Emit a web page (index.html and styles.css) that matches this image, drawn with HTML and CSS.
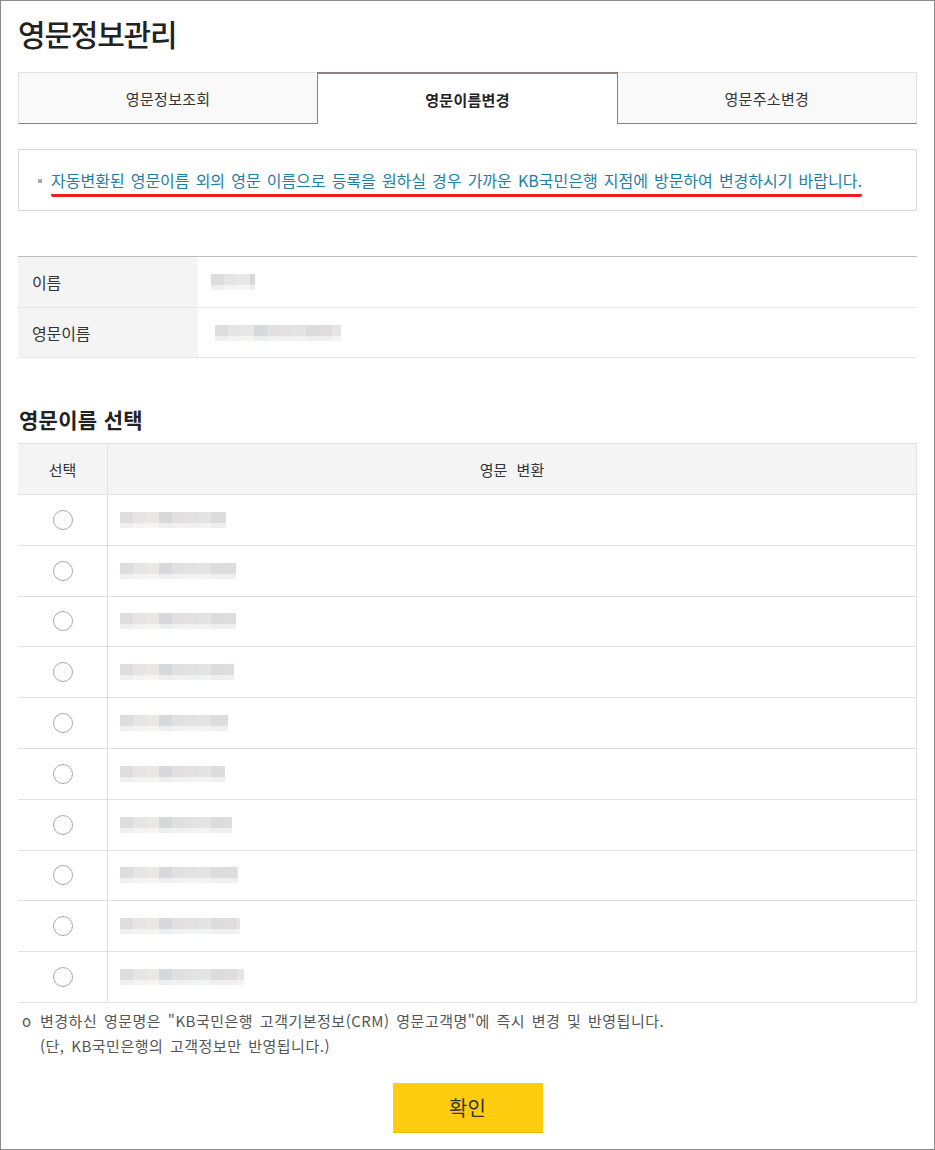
FILE: index.html
```html
<!DOCTYPE html>
<html lang="ko">
<head>
<meta charset="utf-8">
<title>영문정보관리</title>
<link rel="stylesheet" href="styles.css">
</head>
<body>
<div class="frame">
  <h1 class="title">영문정보관리</h1>

  <div class="tabs">
    <div class="tab">영문정보조회</div>
    <div class="tab active">영문이름변경</div>
    <div class="tab last">영문주소변경</div>
  </div>

  <div class="notice">
    <span class="bullet"></span>
    <span class="notice-text">자동변환된 영문이름 외의 영문 이름으로 등록을 원하실 경우 가까운 KB국민은행 지점에 방문하여 변경하시기 바랍니다.</span>
  </div>

  <div class="info">
    <div class="info-row">
      <div class="info-label">이름</div>
      <div class="info-value"><span class="mosaic" style="width:44px;margin-left:13px"></span></div>
    </div>
    <div class="info-row">
      <div class="info-label">영문이름</div>
      <div class="info-value"><span class="mosaic" style="width:126px;margin-left:17px"></span></div>
    </div>
  </div>

  <h2 class="section">영문이름 선택</h2>

  <div class="select-table">
    <div class="srow head">
      <div class="c1">선택</div>
      <div class="c2 center">영문 변환</div>
    </div>
    <div class="srow"><div class="c1"><input type="radio" name="en" class="radio"></div><div class="c2"><span class="mosaic" style="width:106px"></span></div></div>
    <div class="srow"><div class="c1"><input type="radio" name="en" class="radio"></div><div class="c2"><span class="mosaic" style="width:116px"></span></div></div>
    <div class="srow"><div class="c1"><input type="radio" name="en" class="radio"></div><div class="c2"><span class="mosaic" style="width:116px"></span></div></div>
    <div class="srow"><div class="c1"><input type="radio" name="en" class="radio"></div><div class="c2"><span class="mosaic" style="width:114px"></span></div></div>
    <div class="srow"><div class="c1"><input type="radio" name="en" class="radio"></div><div class="c2"><span class="mosaic" style="width:108px"></span></div></div>
    <div class="srow"><div class="c1"><input type="radio" name="en" class="radio"></div><div class="c2"><span class="mosaic" style="width:105px"></span></div></div>
    <div class="srow"><div class="c1"><input type="radio" name="en" class="radio"></div><div class="c2"><span class="mosaic" style="width:112px"></span></div></div>
    <div class="srow"><div class="c1"><input type="radio" name="en" class="radio"></div><div class="c2"><span class="mosaic" style="width:118px"></span></div></div>
    <div class="srow"><div class="c1"><input type="radio" name="en" class="radio"></div><div class="c2"><span class="mosaic" style="width:120px"></span></div></div>
    <div class="srow"><div class="c1"><input type="radio" name="en" class="radio"></div><div class="c2"><span class="mosaic" style="width:124px"></span></div></div>
  </div>

  <div class="note">
    <span class="note-mark">o</span>
    <p class="note-text">변경하신 영문명은 "KB국민은행 고객기본정보(CRM) 영문고객명"에 즉시 변경 및 반영됩니다.<br>(단, KB국민은행의 고객정보만 반영됩니다.)</p>
  </div>

  <div class="actions">
    <button class="btn-ok" type="button">확인</button>
  </div>
</div>
</body>
</html>
```

FILE: styles.css
```css
* { box-sizing: border-box; }
html, body { margin: 0; padding: 0; background: #fff; }
body {
  font-family: "Noto Sans CJK KR", "Noto Sans", sans-serif;
  color: #333;
}
.frame {
  width: 935px;
  height: 1150px;
  border: 1px solid #8a8a8a;
  padding: 0 17px;
  overflow: hidden;
}
.title {
  margin: 0;
  padding-top: 14px;
  font-size: 30px;
  line-height: 36px;
  font-weight: 500;
  letter-spacing: -1.2px;
  color: #222;
}
.tabs {
  display: flex;
  margin-top: 21px;
  height: 52px;
}
.tab {
  flex: 1;
  display: flex;
  align-items: center;
  justify-content: center;
  background: #f9f9f9;
  border-top: 1px solid #e3e3e3;
  border-bottom: 1px solid #8c8178;
  font-size: 15px;
  color: #333;
  letter-spacing: 0.3px;
}
.tab:first-child { border-left: 1px solid #e3e3e3; }
.tab.last { border-right: 1px solid #e3e3e3; }
.tab.active {
  background: #fff;
  border-top: 2px solid #8c8178;
  border-left: 1px solid #8c8178;
  border-right: 1px solid #8c8178;
  border-bottom: none;
  font-weight: 700;
  color: #222;
  padding-top: 1px;
}
.notice {
  margin-top: 25px;
  height: 62px;
  border: 1px solid #d8d8d8;
  padding: 20px 0 0 19px;
  display: flex;
  align-items: flex-start;
}
.bullet {
  width: 4px;
  height: 4px;
  background: #b3aaa1;
  margin-top: 9px;
  margin-right: 9px;
  flex: none;
}
.notice-text {
  display: inline-block;
  font-size: 16px;
  line-height: 20px;
  letter-spacing: 0;
  word-spacing: 1.6px;
  color: #1f7ea6;
  border-bottom: 3px solid #ee1c25;
  border-radius: 2px;
  padding-bottom: 4px;
  white-space: nowrap;
}
.info {
  margin-top: 45px;
  border-top: 1px solid #bdbdbd;
}
.info-row {
  display: flex;
  height: 51px;
  border-bottom: 1px solid #e6e6e6;
}
.info-row:last-child { height: 50px; }
.info-label {
  width: 180px;
  background: #f4f4f4;
  display: flex;
  align-items: center;
  padding-left: 14px;
  font-size: 16px;
  letter-spacing: -0.1px;
  color: #333;
}
.info-value {
  flex: 1;
  display: flex;
  align-items: center;
}
.mosaic {
  display: inline-block;
  height: 16px;
  background-image:
    linear-gradient(to bottom, rgba(255,255,255,0) 0 11px, rgba(255,255,255,0.55) 11px 16px),
    repeating-linear-gradient(to right, #dedcdc 0 13px, #e5e5e5 13px 26px, #e9e8e6 26px 39px, #d5d9dc 39px 52px, #e1e0e0 52px 65px, #e3e2e0 65px 78px, #e2e4e6 78px 91px, #dcdcdc 91px 104px);
}
.section {
  margin: 47px 0 0 1px;
  font-size: 21px;
  line-height: 28px;
  font-weight: 700;
  color: #222;
  letter-spacing: 0.3px;
}
.select-table {
  margin-top: 10px;
  border-top: 1px solid #e2e2e2;
  border-right: 1px solid #e2e2e2;
}
.srow {
  display: flex;
  height: 50.8px;
  border-bottom: 1px solid #e2e2e2;
}
.srow.head {
  height: 51px;
  background: #f4f4f4;
  font-size: 15px;
  color: #333;
}
.c1 {
  width: 90px;
  border-right: 1px solid #e2e2e2;
  display: flex;
  align-items: center;
  justify-content: center;
}
.c2 {
  flex: 1;
  display: flex;
  align-items: center;
  padding-left: 12px;
}
.c2.center {
  justify-content: center;
  padding-left: 0;
  word-spacing: 5px;
}
.radio {
  appearance: none;
  -webkit-appearance: none;
  width: 20px;
  height: 20px;
  margin: 0;
  border: 1px solid #a9a9a9;
  border-radius: 50%;
  background: #fff;
}
.note {
  display: flex;
  margin-top: 5px;
  font-size: 15px;
  line-height: 25px;
  color: #555;
}
.note-mark {
  width: 22px;
  padding-left: 4px;
  flex: none;
  letter-spacing: 0;
}
.note-text {
  margin: 0;
  word-spacing: 2px;
  letter-spacing: 0.5px;
}
.actions {
  display: flex;
  justify-content: center;
  margin-top: 25px;
}
.btn-ok {
  width: 150px;
  height: 50px;
  border: none;
  border-bottom: 1px solid #f5b400;
  background: #ffcd0f;
  font-family: "Noto Sans CJK KR", sans-serif;
  font-size: 20px;
  color: #333;
  cursor: pointer;
  padding: 0;
}
```
